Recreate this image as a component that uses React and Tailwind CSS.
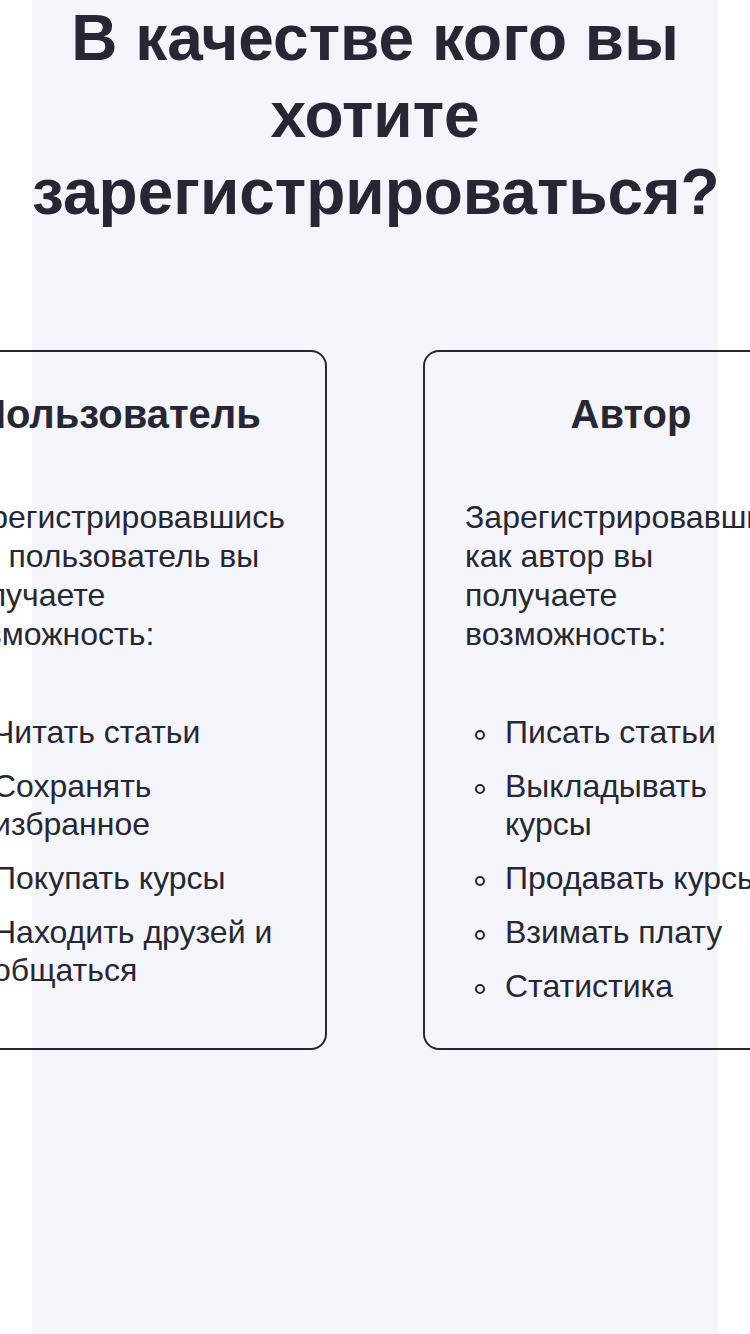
const roles = [
  {
    title: "Пользователь",
    intro: "Зарегистрировавшись как пользователь вы получаете возможность:",
    features: ["Читать статьи", "Сохранять избранное", "Покупать курсы", "Находить друзей и общаться"],
  },
  {
    title: "Автор",
    intro: "Зарегистрировавшись как автор вы получаете возможность:",
    features: ["Писать статьи", "Выкладывать курсы", "Продавать курсы", "Взимать плату", "Статистика"],
  },
];

function RoleCard({ title, intro, features }) {
  return (
    <article className="w-[416px] shrink-0 rounded-2xl border-2 border-[#272733] px-10 pt-[38px] pb-[43px]">
      <h2 className="text-center text-[40px] leading-[48px] font-bold">{title}</h2>
      <p className="mt-15 text-[32px] leading-[39px]">{intro}</p>
      <ul className="mt-[59px] flex flex-col gap-4 text-[32px] leading-[38px]">
        {features.map((feature) => (
          <li key={feature} className="flex items-start">
            <span
              aria-hidden="true"
              className="mt-[17px] mr-5 ml-[10px] size-[10px] shrink-0 rounded-full border-2 border-[#272733]"
            />
            <span>{feature}</span>
          </li>
        ))}
      </ul>
    </article>
  );
}

export default function App() {
  return (
    <div className="overflow-x-hidden bg-white px-8 font-['Liberation_Sans',Arial,sans-serif] text-[#272733]">
      <main className="min-h-screen bg-[#f4f5fb]">
        <h1 className="text-center text-[64px] leading-[77px] font-bold">
          В качестве кого вы хотите зарегистрироваться?
        </h1>
        <div className="mt-[119px] flex justify-center gap-24">
          {roles.map((role) => (
            <RoleCard key={role.title} {...role} />
          ))}
        </div>
      </main>
    </div>
  );
}
